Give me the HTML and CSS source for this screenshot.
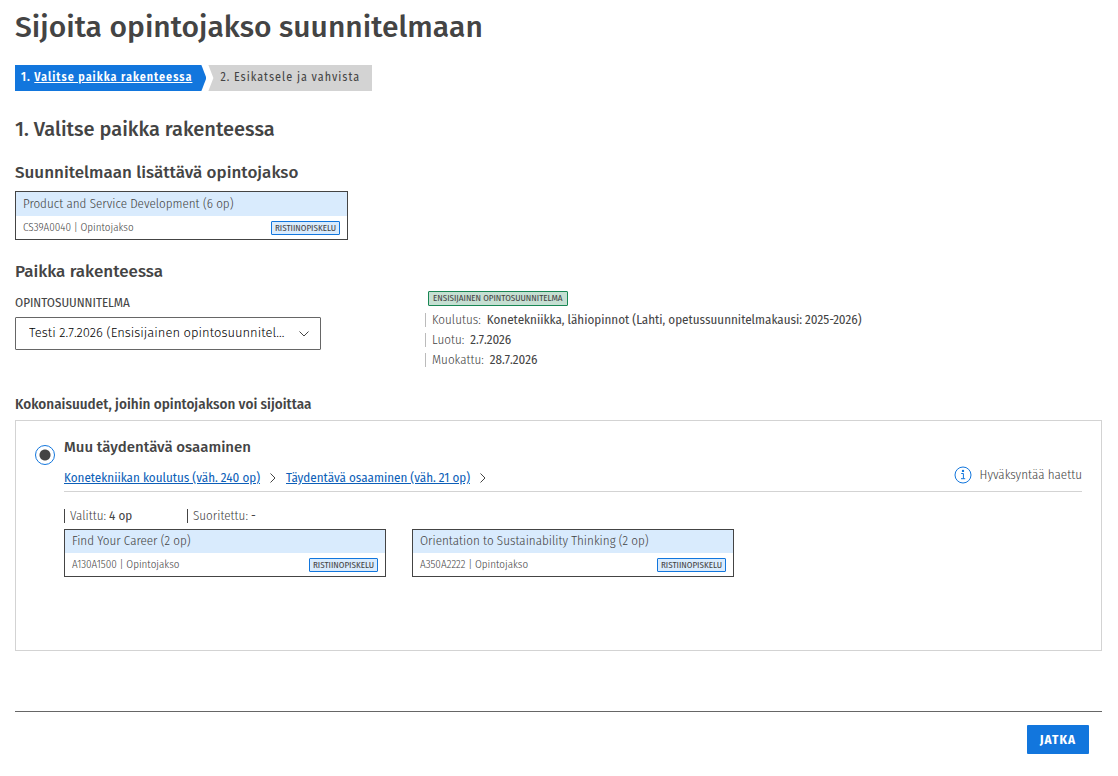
FILE: index.html
```
<!DOCTYPE html>
<html lang="fi">
<head>
  <meta charset="UTF-8" />
  <meta name="viewport" content="width=device-width, initial-scale=1.0" />
  <title>Sijoita opintojakso suunnitelmaan</title>
  <link rel="stylesheet" href="styles.css">
</head>
<body>
  <main>
    <h1>Sijoita opintojakso suunnitelmaan</h1>

    <ol class="steps">
      <li class="step active">1. <a href="#valitse">Valitse paikka rakenteessa</a></li>
      <li class="step">2. Esikatsele ja vahvista</li>
    </ol>

    <h2 id="valitse">1. Valitse paikka rakenteessa</h2>

    <h3>Suunnitelmaan lisättävä opintojakso</h3>
    <div class="course course-wide">
      <div class="course-title">Product and Service Development (6 op)</div>
      <div class="course-info">
        <span>CS39A0040 | Opintojakso</span>
        <span class="tag">RISTIINOPISKELU</span>
      </div>
    </div>

    <h3>Paikka rakenteessa</h3>
    <div class="plan">
      <div class="plan-select">
        <label for="plan">OPINTOSUUNNITELMA</label>
        <div class="select-box">
          <select id="plan">
            <option>Testi 2.7.2026 (Ensisijainen opintosuunnitelma)</option>
          </select>
          <svg class="arrow" width="10" height="6" viewBox="0 0 10 6"><path d="M0.5 0.5L5 5L9.5 0.5" /></svg>
        </div>
      </div>
      <div class="plan-info">
        <span class="tag tag-green">ENSISIJAINEN OPINTOSUUNNITELMA</span>
        <div class="info-row"><span>Koulutus:</span> <b>Konetekniikka, lähiopinnot (Lahti, opetussuunnitelmakausi: 2025-2026)</b></div>
        <div class="info-row"><span>Luotu:</span> <b>2.7.2026</b></div>
        <div class="info-row"><span>Muokattu:</span> <b>28.7.2026</b></div>
      </div>
    </div>

    <h4>Kokonaisuudet, joihin opintojakson voi sijoittaa</h4>
    <section class="panel">
      <input type="radio" id="module" name="module" checked>
      <div class="module">
        <label class="module-title" for="module">Muu täydentävä osaaminen</label>
        <div class="module-head">
          <nav class="path">
            <a href="#">Konetekniikan koulutus (väh. 240 op)</a>
            <svg width="6" height="10" viewBox="0 0 6 10"><path d="M0.5 0.5L5 5L0.5 9.5" /></svg>
            <a href="#">Täydentävä osaaminen (väh. 21 op)</a>
            <svg width="6" height="10" viewBox="0 0 6 10"><path d="M0.5 0.5L5 5L0.5 9.5" /></svg>
          </nav>
          <div class="approval">
            <svg width="18" height="18" viewBox="0 0 18 18">
              <circle cx="9" cy="9" r="8" />
              <path d="M7.2 7.5H9.4V12.6M7 12.7H11.2" />
              <circle class="dot" cx="9" cy="4.9" r="1.2" />
            </svg>
            <span>Hyväksyntää haettu</span>
          </div>
        </div>
        <!-- credits -->
        <div class="credits">
          <div class="credit"><span>Valittu:</span> <b>4 op</b></div>
          <div class="credit"><span>Suoritettu:</span> <b>-</b></div>
        </div>
        <div class="courses">
          <div class="course">
            <div class="course-title">Find Your Career (2 op)</div>
            <div class="course-info">
              <span>A130A1500 | Opintojakso</span>
              <span class="tag">RISTIINOPISKELU</span>
            </div>
          </div>
          <div class="course">
            <div class="course-title">Orientation to Sustainability Thinking (2 op)</div>
            <div class="course-info">
              <span>A350A2222 | Opintojakso</span>
              <span class="tag">RISTIINOPISKELU</span>
            </div>
          </div>
        </div>
      </div>
    </section>

    <footer>
      <button type="button">JATKA</button>
    </footer>
  </main>
</body>
</html>
```
FILE: styles.css
```
* {
  box-sizing: border-box;
}

body {
  margin: 0;
  background: #fff;
  color: #444;
  font-family: 'Fira Sans Condensed', 'Fira Sans', Roboto, 'Liberation Sans', sans-serif;
  font-size: 13px;
  line-height: 20px;
}

main {
  padding: 7px 16px 22px 15px;
}

h1, h2, h3, .module-title, select {
  font-family: 'Fira Sans', Roboto, 'Liberation Sans', sans-serif;
}

h1, h2, h3, h4 {
  margin: 0;
  font-weight: 500;
}

h1 {
  font-size: 30px;
  line-height: 40px;
}

h2 {
  margin-top: 26px;
  font-size: 20px;
  line-height: 24px;
}

h3 {
  margin: 21px 0 7px;
  font-size: 17px;
  line-height: 22px;
}

h4 {
  margin: 21px 0 6px;
  font-size: 15px;
  line-height: 20px;
}

/* steps */
.steps {
  display: flex;
  gap: 2px;
  margin: 18px 0 0;
  padding: 0;
  list-style: none;
}

.step {
  height: 26px;
  padding: 0 12px;
  background: #d3d3d3;
  font-size: 12px;
  letter-spacing: 1px;
  line-height: 24px;
  clip-path: polygon(0 0, 100% 0, 100% 100%, 0 100%, 5px 50%);
}

.step.active {
  padding: 0 14px 0 6px;
  background: #1276dd;
  color: #fff;
  font-weight: 600;
  clip-path: polygon(0 0, calc(100% - 5px) 0, 100% 50%, calc(100% - 5px) 100%, 0 100%);
}

.step a {
  color: #fff;
}

/* course cards */
.course {
  width: 322px;
  border: 1px solid #444;
}

.course-title {
  padding: 0 7px 1px;
  background: #d9ebfd;
  font-weight: 300;
  line-height: 22px;
}

.course-info {
  display: flex;
  align-items: center;
  justify-content: space-between;
  height: 23px;
  padding: 0 7px;
  font-size: 11px;
  font-weight: 300;
}

.course-wide {
  width: 333px;
}

.course-wide .course-title {
  padding-bottom: 0;
  line-height: 24px;
}

.tag {
  padding: 0 3px;
  border: 1px solid #1276dd;
  border-radius: 1px;
  background: #d9ebfd;
  font-size: 9px;
  font-weight: 400;
  line-height: 12px;
}

.tag-green {
  display: block;
  width: fit-content;
  margin: 0 0 7px 3px;
  padding: 0 4px;
  border-color: #198754;
  background: #c5dfd2;
  line-height: 13px;
}

/* plan */
.plan {
  display: flex;
  gap: 104px;
  margin-top: 8px;
}

.plan-select {
  width: 306px;
  padding-top: 2px;
}

.plan-select label {
  display: block;
  margin-bottom: 4px;
}

.select-box {
  display: flex;
  align-items: center;
  position: relative;
}

select {
  width: 100%;
  height: 33px;
  padding: 0 30px 2px 13px;
  border: 1px solid #666;
  border-radius: 1px;
  background: #fff;
  color: #000;
  font-size: 13px;
  font-weight: 300;
  text-overflow: ellipsis;
  appearance: none;
}

svg {
  fill: none;
  stroke: #444;
}

.arrow {
  position: absolute;
  right: 12px;
}

.info-row {
  display: flex;
  gap: 6px;
  margin-bottom: 6px;
  padding-left: 6px;
  border-left: 1px solid #bbb;
  line-height: 14px;
}

.info-row span, .credit span {
  font-weight: 300;
}

.info-row b, .credit b {
  font-weight: 400;
}

/* module panel */
.panel {
  display: flex;
  gap: 9px;
  min-height: 231px;
  padding: 14px 19px;
  border: 1px solid #d3d3d3;
}

.panel input {
  flex: none;
  width: 20px;
  height: 20px;
  margin: 10px 0 0;
  border: 1px solid #1276dd;
  border-radius: 50%;
  background: radial-gradient(circle, #444 5px, #fff 6px);
  appearance: none;
}

.module {
  flex: 1;
}

.module-title {
  display: block;
  font-size: 15px;
  font-weight: 500;
  line-height: 24px;
}

.module-head {
  display: flex;
  justify-content: space-between;
  height: 33px;
  border-bottom: 1px solid #d3d3d3;
}

.path {
  display: flex;
  align-items: center;
  gap: 10px;
  padding-top: 6px;
}

.path a {
  color: #0d5fb8;
}

.approval {
  display: flex;
  align-items: center;
  gap: 8px;
  font-weight: 300;
}

.approval svg {
  stroke: #1276dd;
}

.approval .dot {
  fill: #1276dd;
  stroke: none;
}

.credits {
  display: flex;
  gap: 4px;
  margin: 17px 0 6px;
}

.credit {
  width: 119px;
  padding-left: 5px;
  border-left: 1px solid #444;
  line-height: 14px;
}

.courses {
  display: flex;
  gap: 26px;
}

footer {
  display: flex;
  justify-content: flex-end;
  margin-top: 60px;
  padding: 13px;
  border-top: 1px solid #666;
}

button {
  padding: 0 13px;
  border: none;
  border-radius: 1px;
  background: #1276dd;
  color: #fff;
  font: inherit;
  font-weight: 700;
  letter-spacing: 1px;
  line-height: 29px;
}
```
